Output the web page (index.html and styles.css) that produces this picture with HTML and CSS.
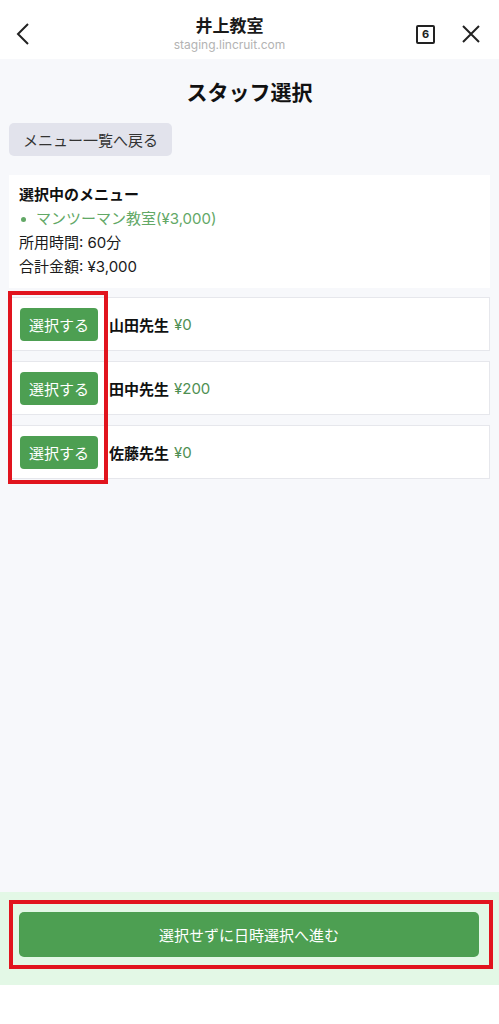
FILE: index.html
```html
<!DOCTYPE html>
<html lang="ja">
<head>
<meta charset="utf-8">
<link rel="stylesheet" href="styles.css">
</head>
<body>
<div class="page">
  <header class="topbar">
    <div class="back">
      <svg width="14" height="24" viewBox="0 0 14 24"><path d="M12 2 L2 12 L12 22" fill="none" stroke="#222" stroke-width="2"/></svg>
    </div>
    <div class="titles">
      <div class="site">井上教室</div>
      <div class="url">staging.lincruit.com</div>
    </div>
    <div class="actions">
      <div class="tabs">6</div>
      <svg class="close" width="20" height="20" viewBox="0 0 20 20"><path d="M2 2 L18 18 M18 2 L2 18" fill="none" stroke="#222" stroke-width="2"/></svg>
    </div>
  </header>
  <main class="main">
    <h1 class="title">スタッフ選択</h1>
    <div class="backrow"><button class="backbtn">メニュー一覧へ戻る</button></div>
    <section class="menu">
      <div class="menu-head">選択中のメニュー</div>
      <ul class="menu-list"><li>マンツーマン教室(¥3,000)</li></ul>
      <div class="menu-line">所用時間: 60分</div>
      <div class="menu-line">合計金額: ¥3,000</div>
    </section>
    <div class="staff">
      <div class="staff-row"><button class="pick">選択する</button><span class="name">山田先生</span><span class="price">¥0</span></div>
      <div class="staff-row"><button class="pick">選択する</button><span class="name">田中先生</span><span class="price">¥200</span></div>
      <div class="staff-row"><button class="pick">選択する</button><span class="name">佐藤先生</span><span class="price">¥0</span></div>
      <div class="mark-col"></div>
    </div>
  </main>
  <footer class="footer">
    <div class="mark-wrap"><button class="next">選択せずに日時選択へ進む</button></div>
  </footer>
  <div class="bottom-space"></div>
</div>
</body>
</html>
```
FILE: styles.css
```css
* { box-sizing: border-box; }
html, body { margin: 0; padding: 0; }
body {
  font-family: "Inter", "Noto Sans CJK JP", sans-serif;
  color: #111;
  background: #fff;
}
.page {
  width: 499px;
  height: 1024px;
  display: flex;
  flex-direction: column;
  overflow: hidden;
}
.topbar {
  height: 59px;
  flex: none;
  background: #fff;
  display: flex;
  align-items: center;
  position: relative;
}
.back {
  width: 60px;
  padding-left: 16px;
  padding-top: 9px;
  display: flex;
  align-items: center;
}
.titles {
  flex: 1;
  text-align: center;
  padding-top: 8px;
}
.site {
  font-family: "Noto Sans CJK JP", sans-serif;
  font-size: 17px;
  font-weight: 700;
  line-height: 20px;
  color: #1a1a1a;
}
.url {
  font-size: 12px;
  line-height: 16px;
  color: #b3b3b3;
  margin-top: 2px;
}
.actions {
  width: 100px;
  display: flex;
  align-items: center;
  justify-content: flex-end;
  gap: 26px;
  padding-right: 18px;
  padding-top: 9px;
}
.tabs {
  width: 19px;
  height: 19px;
  border: 2px solid #222;
  border-radius: 2px;
  font-size: 11px;
  font-weight: 700;
  line-height: 15px;
  text-align: center;
  color: #222;
}
.main {
  flex: 1;
  background: #f7f8fb;
  padding: 0 9px;
}
.title {
  margin: 0;
  padding-top: 18px;
  font-family: "Noto Sans CJK JP", sans-serif;
  font-size: 21px;
  font-weight: 700;
  line-height: 28px;
  text-align: center;
  color: #111;
}
.backrow {
  margin-top: 18px;
}
.backbtn {
  font-family: "Noto Sans CJK JP", sans-serif;
  height: 33px;
  width: 163px;
  border: none;
  border-radius: 5px;
  background: #e2e3ec;
  color: #333;
  font-size: 15px;
  padding: 0;
}
.menu {
  margin-top: 19px;
  background: #fff;
  padding: 8px 10px 9px;
}
.menu-head {
  font-size: 15px;
  font-weight: 700;
  line-height: 24px;
}
.menu-list {
  margin: 0;
  padding: 0;
  list-style: none;
}
.menu-list li {
  position: relative;
  padding-left: 17px;
  font-size: 15px;
  line-height: 24px;
  color: #62a866;
}
.menu-list li::before {
  content: "";
  position: absolute;
  left: 2px;
  top: 10px;
  width: 5px;
  height: 5px;
  border-radius: 50%;
  background: #62a866;
}
.menu-line {
  font-size: 15px;
  line-height: 24px;
  color: #1a1a1a;
}
.staff {
  margin-top: 9px;
  display: flex;
  flex-direction: column;
  gap: 10px;
  position: relative;
}
.staff-row {
  height: 54px;
  background: #fff;
  border: 1px solid #e6e7ec;
  display: flex;
  align-items: center;
  padding-left: 10px;
}
.pick {
  font-family: "Noto Sans CJK JP", sans-serif;
  width: 78px;
  height: 33px;
  border: none;
  border-radius: 4px;
  background: #4d9f52;
  color: #fff;
  font-size: 15px;
  padding: 0;
  margin-right: 11px;
}
.name {
  font-size: 15px;
  font-weight: 700;
  color: #111;
}
.price {
  margin-left: 5px;
  font-size: 15px;
  color: #4e8f52;
}
.mark-col {
  position: absolute;
  left: -1px;
  top: -6px;
  width: 100px;
  height: 193px;
  border: 4px solid #e1141e;
  pointer-events: none;
}
.footer {
  height: 93px;
  flex: none;
  background: #e3f8e6;
  padding-top: 8px;
  padding-left: 9px;
  padding-right: 6px;
}
.mark-wrap {
  border: 4px solid #e1141e;
  height: 69px;
  padding: 8px 10px 0 6px;
}
.next {
  font-family: "Noto Sans CJK JP", sans-serif;
  width: 100%;
  height: 45px;
  border: none;
  border-radius: 5px;
  background: #4d9f52;
  color: #fff;
  font-size: 15px;
  padding: 0;
}
.bottom-space {
  height: 39px;
  flex: none;
  background: #fff;
}
```
